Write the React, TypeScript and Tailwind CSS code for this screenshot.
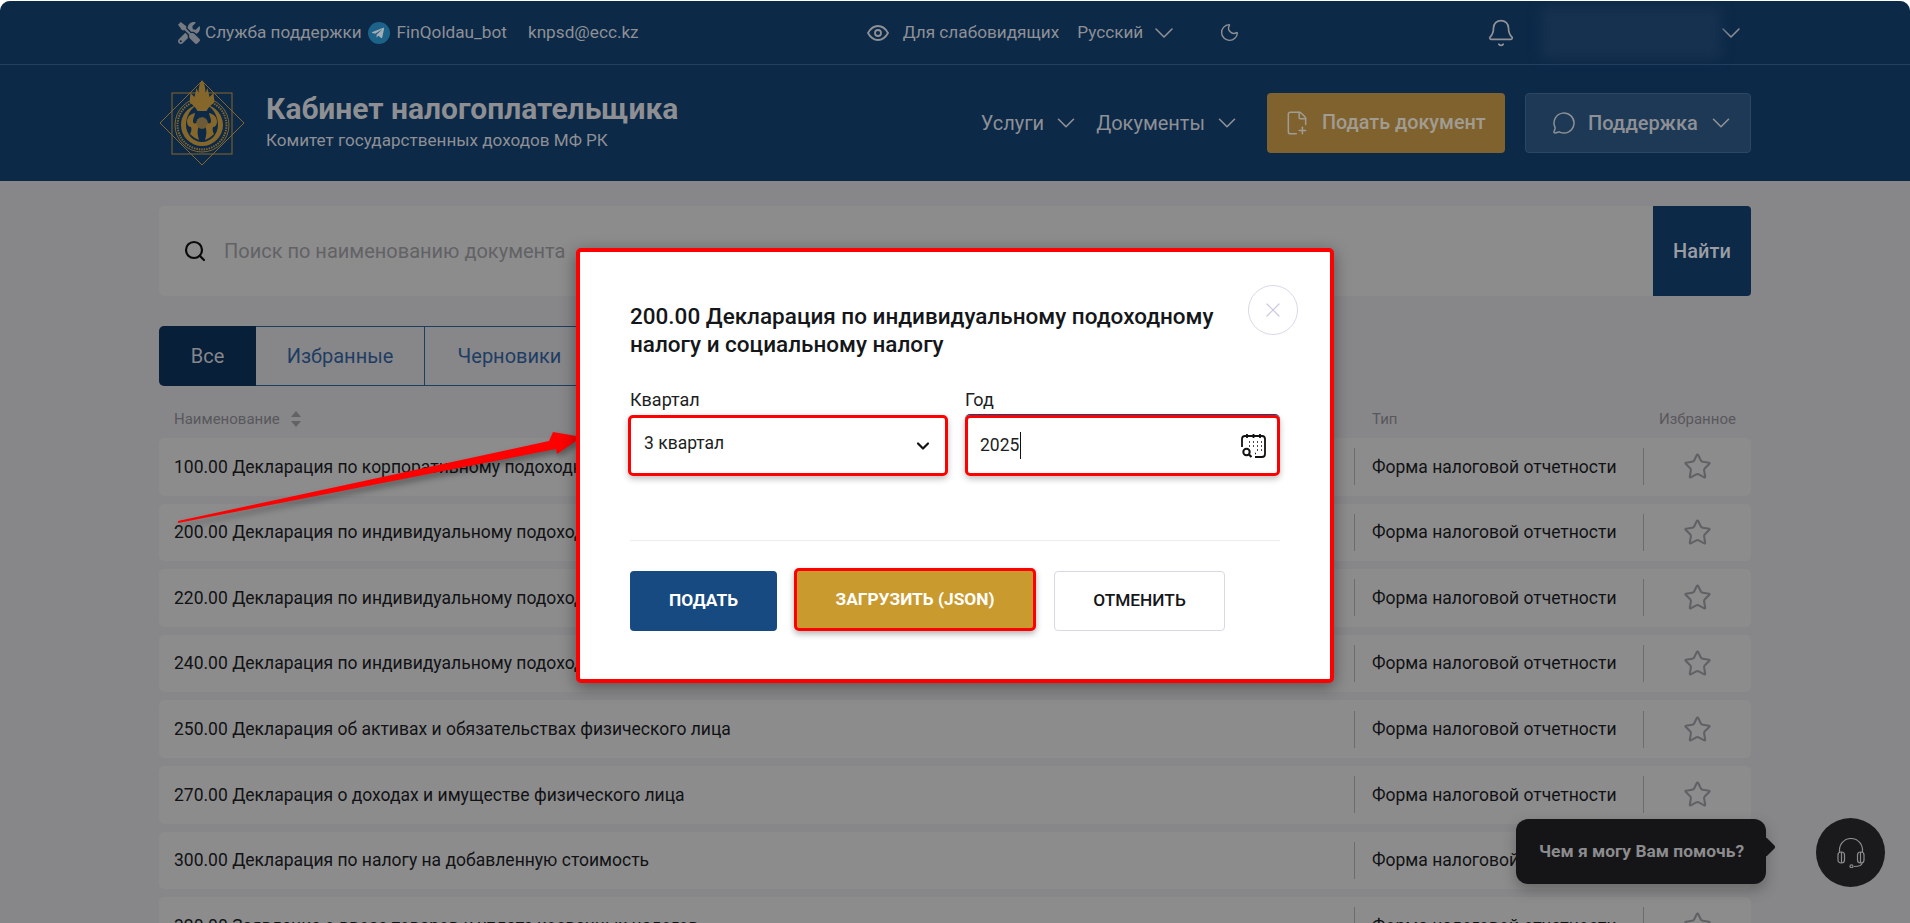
import { Bell, ChevronDown, FilePlus2, MessageCircle, Moon, Search, Star, X } from "lucide-react"
import { FaTools, FaTelegramPlane } from "react-icons/fa"

const rows = [
  "100.00 Декларация по корпоративному подоходному налогу",
  "200.00 Декларация по индивидуальному подоходному налогу и социальному налогу",
  "220.00 Декларация по индивидуальному подоходному налогу",
  "240.00 Декларация по индивидуальному подоходному налогу",
  "250.00 Декларация об активах и обязательствах физического лица",
  "270.00 Декларация о доходах и имуществе физического лица",
  "300.00 Декларация по налогу на добавленную стоимость",
  "320.00 Заявление о ввозе товаров и уплате косвенных налогов",
]

function Logo() {
  return (
    <svg viewBox="0 0 86 86" className="w-[86px] h-[86px] shrink-0" fill="none">
      <path d="M43 1 85 43 43 85 1 43Z" stroke="#85672c" strokeWidth="1" />
      <rect x="13" y="13" width="60" height="61" stroke="#85672c" strokeWidth="1" />
      <circle cx="43" cy="45" r="27" fill="#0c2948" stroke="#85672c" strokeWidth="1" />
      <path d="M43 66a21 21 0 0 1-21-21c0-10 7-18 16-20-6 3-11 11-11 20 0 9 7 17 16 17s16-8 16-17c0-9-5-17-11-20 9 2 16 10 16 20a21 21 0 0 1-21 21Z" fill="#85672c" />
      <circle cx="43" cy="45" r="24.500" stroke="#85672c" strokeWidth="2" strokeDasharray="1.500 1" />
      <path d="M43 0c2.500 3 3.500 8 3.500 13l2-5 2 9 4-4 1 9c-3 3-6 5-8 9h-9c-2-4-5-6-8-9l1-9 4 4 2-9 2 5c0-5 1-10 3.500-13Z" fill="#85672c" />
      <path d="M36 33c-5 1-8 4-8 9 0 3 2 5 4 5 1 3 0 5-1 7 3 3 6 5 9 6-1-4-2-7-1-11 1-3 0-5-2-6-2 1-3 0-3-2 0-3 2-6 2-8Z" fill="#85672c" />
      <path d="M50 33c5 1 8 4 8 9 0 3-2 5-4 5-1 3 0 5 1 7-3 3-6 5-9 6 1-4 2-7 1-11-1-3 0-5 2-6 2 1 3 0 3-2 0-3-2-6-2-8Z" fill="#85672c" />
      <circle cx="43" cy="43" r="5.500" fill="#6d5a36" stroke="#85672c" strokeDasharray="1 1" />
    </svg>
  )
}

function CalendarFind() {
  return (
    <svg viewBox="0 0 25 25" className="w-[25px] h-[25px] text-[#111]" fill="none" stroke="currentColor" strokeWidth="1.8">
      <path d="M1 14V6a3 3 0 0 1 3-3h17a3 3 0 0 1 3 3v15a3 3 0 0 1-3 3h-7" />
      <path d="M6 1v4M12.500 1v4M19 1v4" />
      <path d="M8 9h1M12 9h1M16 9h1M20 9h1M8 13h1M12 13h1M16 13h1M20 13h1M16 17h1M20 17h1M14 20.500h1" strokeWidth="1.500" />
      <circle cx="5.500" cy="19" r="3.200" strokeWidth="2" />
      <path d="m8 21.500 2.500 2.500" strokeWidth="2.200" />
    </svg>
  )
}

function HeadsetIcon() {
  return (
    <svg viewBox="0 0 28 30" className="w-[28px] h-[30px]" fill="none" stroke="currentColor" strokeWidth="1.2">
      <path d="M2.500 15v-3a11.500 11.500 0 0 1 23 0v3" />
      <rect x="1" y="14" width="6.500" height="11" rx="3" />
      <rect x="20.500" y="14" width="6.500" height="11" rx="3" />
      <path d="M4.500 14v11M23.500 14v11" />
      <path d="M25 25c0 2.500-3.500 3.500-8 3.500" />
      <circle cx="14.500" cy="28.300" r="1.500" />
    </svg>
  )
}

function Row({ name }: { name: string }) {
  return (
    <div className="flex items-center h-[57.6px] shrink-0 rounded-[5px] bg-[#8c8c8d] pl-[15px] text-[17.5px] text-[#111214]">
      <div className="flex-1 whitespace-nowrap">{name}</div>
      <div className="w-px h-[37px] bg-[#6b6b70]" />
      <div className="w-[288px] pl-[17px] whitespace-nowrap">Форма налоговой отчетности</div>
      <div className="w-px h-[37px] bg-[#6b6b70]" />
      <div className="w-[107px] flex justify-center">
        <Star size={29} strokeWidth={1.7} className="text-[#616165]" />
      </div>
    </div>
  )
}

export default function App() {
  return (
    <div className="relative h-[923px] overflow-hidden bg-white pt-px font-['Roboto',sans-serif]">
      <div className="h-full bg-[#878789] rounded-t-[10px] overflow-hidden">
        {/* Header */}
        <header className="bg-[#0c2948] h-[180px] text-[#8e9095]">
          <div className="flex items-center h-[64px] pl-[178px] border-b border-[#24415f] text-[17.2px]">
            <FaTools size={22} className="text-[#767a82] mr-[5px]" />
            <span>Служба поддержки</span>
            <span className="ml-[6px] mr-[7px] flex items-center justify-center w-[22px] h-[22px] rounded-full bg-[#1d6288]">
              <FaTelegramPlane size={14} className="text-[#a5adb5] -ml-px" />
            </span>
            <span>FinQoldau_bot</span>
            <span className="ml-[21px]">knpsd@ecc.kz</span>
            <svg viewBox="0 0 24 24" className="ml-[227px] w-[24px] h-[24px]" fill="none" stroke="currentColor" strokeWidth="1.8">
              <path d="M2 12c2.500-4.500 6-7 10-7s7.500 2.500 10 7c-2.500 4.500-6 7-10 7s-7.500-2.500-10-7Z" />
              <circle cx="12" cy="12" r="3" />
            </svg>
            <span className="ml-[13px]">Для слабовидящих</span>
            <span className="ml-[18px]">Русский</span>
            <ChevronDown size={32} strokeWidth={1.2} className="ml-[5px]" />
            <Moon size={21} strokeWidth={1.6} className="ml-[39px]" />
            <Bell size={30} strokeWidth={1.4} className="ml-[246px]" />
            <div className="ml-[25px] w-[180px] h-[52px] bg-[#16314f] blur-[6px]" />
            <ChevronDown size={32} strokeWidth={1.2} className="-ml-[6px]" />
          </div>
          <div className="flex items-center h-[115px] pl-[159px] pr-[159px]">
            <Logo />
            <div className="ml-[21px] pb-[2px]">
              <div className="text-[30px] leading-[36px] font-bold text-[#8e8f93]">Кабинет налогоплательщика</div>
              <div className="text-[17.1px] leading-[24px] mt-[1px]">Комитет государственных доходов МФ РК</div>
            </div>
            <div className="ml-auto flex items-center text-[20px]">
              Услуги
              <ChevronDown size={30} strokeWidth={1.3} className="ml-[7px]" />
            </div>
            <div className="ml-[15px] flex items-center text-[20px]">
              Документы
              <ChevronDown size={30} strokeWidth={1.3} className="ml-[7px]" />
            </div>
            <button className="ml-[25px] flex items-center h-[60px] w-[238px] pl-[17px] rounded-[4px] bg-[#80622f] text-[19.8px] font-medium text-[#a09c92]">
              <FilePlus2 size={26} strokeWidth={1.4} />
              <span className="ml-[12px]">Подать документ</span>
            </button>
            <button className="ml-[20px] flex items-center h-[60px] w-[226px] pl-[26px] rounded-[4px] bg-[#1d3956] border border-[#2c4763] text-[20px] font-medium">
              <MessageCircle size={24} strokeWidth={1.5} />
              <span className="ml-[12px]">Поддержка</span>
              <ChevronDown size={30} strokeWidth={1.3} className="ml-[8px]" />
            </button>
          </div>
        </header>

        {/* Content */}
        <main className="mx-[159px] pt-[25px]">
          <div className="flex items-center h-[90px] rounded-[5px] bg-[#8c8c8d]">
            <Search size={24} strokeWidth={2.2} className="ml-[24px] text-[#0a0a0c]" />
            <span className="ml-[17px] text-[20px] text-[#626265]">Поиск по наименованию документа</span>
            <button className="ml-auto w-[98px] h-full rounded-r-[4px] bg-[#0c2948] text-[20px] font-medium text-[#9b9da2]">Найти</button>
          </div>

          <div className="mt-[30px] flex h-[60px] w-fit text-[20px] text-[#1f3d63]">
            <div className="w-[97px] flex items-center justify-center rounded-l-[5px] bg-[#081f39] text-[#85878c]">Все</div>
            <div className="w-[169px] flex items-center justify-center border-y border-r border-[#1e3e60]">Избранные</div>
            <div className="w-[170px] flex items-center justify-center border-y border-r border-[#1e3e60]">Черновики</div>
          </div>

          <div className="flex items-center h-[52px] pt-[14px] pl-[15px] text-[15px] text-[#58585c]">
            <span>Наименование</span>
            <svg viewBox="0 0 10 16" className="ml-[11px] w-[10px] h-[16px] fill-[#626266]">
              <path d="M5 0l5 6H0ZM5 16 0 10h10Z" />
            </svg>
            <span className="ml-auto w-[288px] pl-[16px]">Тип</span>
            <span className="w-[107px] text-center">Избранное</span>
          </div>

          <div className="flex flex-col gap-2">
            {rows.map((r) => (
              <Row key={r} name={r} />
            ))}
          </div>
        </main>
      </div>

      {/* Annotation arrow */}
      <svg className="absolute left-0 top-0 w-[700px] h-[600px] drop-shadow-[2px_4px_3px_rgba(0,0,0,0.35)]" viewBox="0 0 700 600">
        <path d="M178 521 549 441 553 432 582 437 557 454 556 449 178 523Z" fill="#ff0000" />
      </svg>

      {/* Modal */}
      <div className="absolute left-[576px] top-[248px] w-[758px] h-[435px] border-4 border-[#ff0000] rounded-[5px] bg-white shadow-[0_4px_16px_rgba(0,0,0,0.4)] pl-[50px] pr-[50px] pt-[50px]">
        <button className="absolute right-[32px] top-[33px] flex items-center justify-center w-[50px] h-[50px] rounded-full border border-[#d8d8ea] text-[#c8c8e0]">
          <X size={24} strokeWidth={1.2} />
        </button>
        <h2 className="w-[600px] text-[22.5px] leading-[28px] font-medium text-[#14161a]">
          200.00 Декларация по индивидуальному подоходному налогу и социальному налогу
        </h2>
        <div className="mt-[30px] flex gap-[17px] text-[17.5px] text-[#1c1e22]">
          <div className="-ml-[2px]">
            <div className="pl-[2px] leading-[24px] text-[18px]">Квартал</div>
            <div className="mt-[3px] flex items-center justify-between w-[320px] h-[61px] border-[3px] border-[#ff0000] rounded-[5px] shadow-[0_3px_6px_rgba(0,0,0,0.25)] pl-[13px] pr-[12px] pb-[4px]">
              <span>3 квартал</span>
              <ChevronDown size={20} strokeWidth={2.6} className="mt-[5px] text-[#111]" />
            </div>
          </div>
          <div>
            <div className="leading-[24px] text-[18px]">Год</div>
            <div className="mt-[3px] flex items-center justify-between w-[315px] h-[61px] border-[3px] border-[#ff0000] rounded-[5px] shadow-[0_3px_6px_rgba(0,0,0,0.25),0_-1px_0_#174a80] pl-[12px] pr-[11px]">
              <span className="border-r border-[#111] pr-px">2025</span>
              <CalendarFind />
            </div>
          </div>
        </div>
        <div className="mt-[64px] h-px w-[650px] bg-[#ececf2]" />
        <div className="mt-[27px] flex items-center text-[17.3px] font-bold">
          <button className="uppercase mt-[3px] w-[147px] h-[60px] rounded-[4px] bg-[#174a80] text-white">Подать</button>
          <button className="uppercase ml-[17px] w-[242px] h-[63px] rounded-[5px] border-[3px] border-[#ff0000] bg-[#c99a2e] text-white shadow-[0_3px_6px_rgba(0,0,0,0.3)]">Загрузить (JSON)</button>
          <button className="uppercase ml-[18px] mt-[3px] w-[171px] h-[60px] rounded-[4px] border border-[#d8d8e8] text-[#14161a] font-medium">Отменить</button>
        </div>
      </div>

      {/* Help widget */}
      <div className="absolute left-[1516px] top-[819px] flex items-center w-[250px] h-[65px] pl-[23px] rounded-[12px] bg-[#151517] text-[17.4px] font-bold text-[#8c8c8e] shadow-[0_6px_14px_rgba(0,0,0,0.25)]">
        Чем я могу Вам помочь?
        <div className="absolute -right-[7px] top-[21px] w-[14px] h-[14px] rotate-45 rounded-[2px] bg-[#151517]" />
      </div>
      <div className="absolute left-[1816px] top-[818px] flex items-center justify-center w-[69px] h-[69px] rounded-full bg-[#1a1a1c] text-[#8c8c8e]">
        <HeadsetIcon />
      </div>
    </div>
  )
}
